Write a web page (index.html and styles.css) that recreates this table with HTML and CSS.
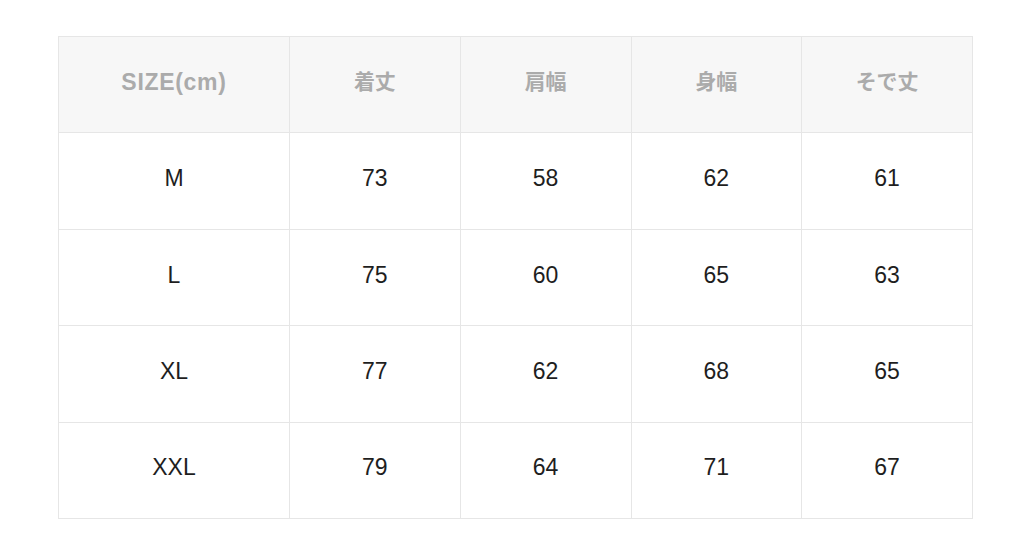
FILE: index.html
```html
<!DOCTYPE html>
<html lang="ja">
<head>
<meta charset="utf-8">
<link rel="stylesheet" href="styles.css">
</head>
<body>
<div class="wrap">
<table class="size-table">
  <colgroup>
    <col class="c-first"><col class="c"><col class="c"><col class="c"><col class="c">
  </colgroup>
  <thead>
    <tr><th class="latin">SIZE(cm)</th><th>着丈</th><th>肩幅</th><th>身幅</th><th>そで丈</th></tr>
  </thead>
  <tbody>
    <tr><td>M</td><td>73</td><td>58</td><td>62</td><td>61</td></tr>
    <tr><td>L</td><td>75</td><td>60</td><td>65</td><td>63</td></tr>
    <tr><td>XL</td><td>77</td><td>62</td><td>68</td><td>65</td></tr>
    <tr><td>XXL</td><td>79</td><td>64</td><td>71</td><td>67</td></tr>
  </tbody>
</table>
</div>
</body>
</html>
```
FILE: styles.css
```css
html, body { margin: 0; padding: 0; background: #fff; }
body { font-family: "Liberation Sans", "Noto Sans CJK JP", sans-serif; }
.wrap { padding: 36px 0 0 58px; }
.size-table {
  border-collapse: collapse;
  table-layout: fixed;
  width: 915px;
}
.c-first { width: 231px; }
.size-table th, .size-table td {
  border: 1px solid #e6e6e6;
  text-align: center;
  vertical-align: middle;
  height: 96.4px;
  padding: 0 0 4px 0;
  box-sizing: border-box;
  line-height: 1.2;
}
.size-table th {
  background: #f7f7f7;
  color: #ababab;
  font-weight: 700;
  font-size: 21px;
  padding-bottom: 6px;
}
.size-table th.latin {
  font-size: 23px;
  letter-spacing: 0.7px;
  padding-bottom: 3px;
}
.size-table td {
  color: #1e1e1e;
  font-size: 23px;
  font-weight: 400;
}
```
